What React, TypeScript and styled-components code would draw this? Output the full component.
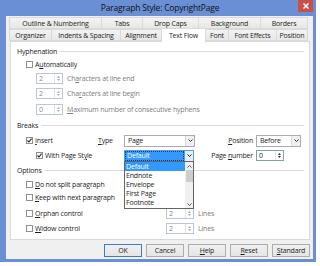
import styled, { createGlobalStyle } from "styled-components";

const GlobalStyle = createGlobalStyle`
  html, body { margin: 0; padding: 0; background: #fff; }
  body {
    font-family: "Open Sans", "Noto Sans", sans-serif;
    font-size: 7px;
    letter-spacing: -0.18px;
    color: #1e1e1e;
  }
  * { box-sizing: border-box; }
`;

const StyledWindow = styled.div`
  width: 316px;
  height: 262px;
  background: #6a8fd5;
  display: flex;
  flex-direction: column;
  padding: 0 3px 3px 6px;
`;

const StyledTitleBar = styled.div`
  height: 16px;
  margin: 0 -3px 0 -6px;
  display: grid;
  grid-template-columns: 1fr auto 1fr;
  align-items: start;
`;

const StyledTitle = styled.div`
  grid-column: 2;
  font-size: 8.5px;
  letter-spacing: -0.2px;
  line-height: 15px;
  color: #111;
  padding-left: 4px;
`;

const StyledClose = styled.div`
  grid-column: 3;
  justify-self: end;
  width: 15px;
  height: 12px;
  margin-right: 3px;
  background: #c7504b;
  display: flex;
  align-items: center;
  justify-content: center;
`;

const StyledClient = styled.div`
  flex: 1;
  background: #f0f0f0;
  display: flex;
  flex-direction: column;
  padding: 1px 2px 2px 3px;
`;

const StyledTabRow = styled.div`
  display: flex;
  height: 12px;
  align-items: flex-end;
`;

const StyledTab = styled.div<{ $w: number; $active?: boolean }>`
  flex: 0 0 ${({ $w }) => $w}px;
  height: ${({ $active }) => ($active ? 14 : 12)}px;
  margin-left: -1px;
  margin-bottom: ${({ $active }) => ($active ? -1 : 0)}px;
  border: 1px solid #d9d9d9;
  border-bottom: ${({ $active }) => ($active ? "none" : "1px solid #d9d9d9")};
  background: ${({ $active }) =>
    $active ? "#fff" : "linear-gradient(#f3f3f3, #e7e7e7)"};
  position: relative;
  z-index: ${({ $active }) => ($active ? 1 : 0)};
  display: flex;
  align-items: center;
  justify-content: center;
  white-space: nowrap;
  color: #1e1e1e;
  &:first-child { margin-left: 0; }
`;

const StyledPanel = styled.div`
  height: 199px;
  margin: 0 1px 0 1px;
  background: #fff;
  border: 1px solid #d9d9d9;
  padding: 3px 0 0 0;
  display: flex;
  flex-direction: column;
`;

const StyledRow = styled.div<{ $h: number; $indent?: number }>`
  height: ${({ $h }) => $h}px;
  flex: none;
  display: flex;
  align-items: center;
  padding-left: ${({ $indent }) => $indent ?? 15}px;
  white-space: nowrap;
`;

const StyledSectionTitle = styled(StyledRow)`
  gap: 3px;
  padding-right: 5px;
  color: #222;
  &::after {
    content: "";
    flex: 1;
    height: 1px;
    background: #dcdcdc;
  }
`;

const StyledCheckItem = styled.div<{ $w?: number }>`
  display: flex;
  align-items: center;
  gap: 2px;
  width: ${({ $w }) => ($w ? `${$w}px` : "auto")};
  flex: none;
`;

const StyledBox = styled.span`
  width: 7px;
  height: 7px;
  border: 1px solid #8f8f8f;
  background: #fff;
  display: flex;
  align-items: center;
  justify-content: center;
`;

const StyledLabel = styled.span<{ $muted?: boolean }>`
  color: ${({ $muted }) => ($muted ? "#7d7d7d" : "#1e1e1e")};
  & u { text-decoration-thickness: 0.5px; text-underline-offset: 1px; }
`;

const StyledSpin = styled.div<{ $w: number; $disabled?: boolean }>`
  width: ${({ $w }) => $w}px;
  height: 11px;
  flex: none;
  display: flex;
  background: #fff;
  border: 1px solid ${({ $disabled }) => ($disabled ? "#b8c6d6" : "#7f9db9")};
  color: ${({ $disabled }) => ($disabled ? "#8a8a8a" : "#1e1e1e")};
  margin-right: 4px;
`;

const StyledSpinValue = styled.span`
  flex: 1;
  padding-left: 2px;
  line-height: 9px;
`;

const StyledSpinButtons = styled.span<{ $disabled?: boolean }>`
  width: 8px;
  border-left: 1px solid #e3e3e3;
  display: flex;
  flex-direction: column;
  align-items: center;
  justify-content: center;
  gap: 1px;
  color: ${({ $disabled }) => ($disabled ? "#a8a8a8" : "#333")};
`;

const StyledBreaksGrid = styled.div`
  display: grid;
  grid-template-columns: 87px 26px 71px 61px 45px;
  grid-template-rows: 15px 15px;
  align-items: center;
  flex: none;
`;

const StyledCell = styled.div<{ $right?: boolean; $indent?: number; $span?: number }>`
  grid-column: ${({ $span }) => ($span ? `span ${$span}` : "auto")};
  display: flex;
  align-items: center;
  justify-content: ${({ $right }) => ($right ? "flex-end" : "flex-start")};
  padding-left: ${({ $indent }) => $indent ?? 0}px;
  padding-right: ${({ $right }) => ($right ? 3 : 0)}px;
  white-space: nowrap;
  position: relative;
`;

const StyledCombo = styled.div<{ $w: number; $focus?: boolean }>`
  width: ${({ $w }) => $w}px;
  height: 12px;
  display: flex;
  background: #fff;
  border: 1px solid ${({ $focus }) => ($focus ? "#569de5" : "#acacac")};
  position: relative;
`;

const StyledComboText = styled.span<{ $selected?: boolean }>`
  flex: 1;
  display: flex;
  align-items: center;
  padding-left: 2px;
  background: ${({ $selected }) => ($selected ? "#3399ff" : "transparent")};
  background-clip: content-box;
  color: ${({ $selected }) => ($selected ? "#fff" : "#1e1e1e")};
  border: 1px ${({ $selected }) => ($selected ? "dotted #1e3a78" : "solid transparent")};
  ${({ $selected }) => ($selected ? "padding-left: 1px; background-clip: border-box;" : "")}
`;

const StyledComboButton = styled.span<{ $focus?: boolean }>`
  width: 9px;
  border-left: 1px solid ${({ $focus }) => ($focus ? "#569de5" : "#dadada")};
  background: ${({ $focus }) => ($focus ? "#e5f1fb" : "#f0f0f0")};
  display: flex;
  align-items: center;
  justify-content: center;
`;

const StyledDropList = styled.div`
  position: absolute;
  top: 100%;
  left: -1px;
  width: 70px;
  height: 48px;
  background: #fff;
  border: 1px solid #646464;
  display: flex;
  z-index: 5;
`;

const StyledItems = styled.div`
  flex: 1;
  display: flex;
  flex-direction: column;
`;

const StyledItem = styled.div<{ $selected?: boolean }>`
  height: 9.2px;
  line-height: 9.2px;
  padding-left: 1px;
  background: ${({ $selected }) => ($selected ? "#3399ff" : "transparent")};
  color: ${({ $selected }) => ($selected ? "#fff" : "#1e1e1e")};
`;

const StyledScrollBar = styled.div`
  width: 8px;
  background: #f0f0f0;
  display: flex;
  flex-direction: column;
  align-items: center;
  justify-content: space-between;
  padding: 3px 0 2px;
`;

const StyledThumb = styled.div`
  width: 7px;
  height: 12px;
  background: #cdcdcd;
  margin-bottom: auto;
  margin-top: 2px;
`;

const StyledButtonRow = styled.div`
  display: flex;
  justify-content: flex-end;
  gap: 4px;
  margin-top: 4px;
  padding-right: 1px;
`;

const StyledButton = styled.div<{ $default?: boolean }>`
  width: 38px;
  height: 13px;
  border: 1px solid ${({ $default }) => ($default ? "#3c7fb1" : "#adadad")};
  background: linear-gradient(#f0f0f0, #e5e5e5);
  display: flex;
  align-items: center;
  justify-content: center;
  color: #1e1e1e;
  & u { text-decoration-thickness: 0.5px; text-underline-offset: 1px; }
`;

const Check = () => (
  <svg width="5" height="5" viewBox="0 0 5 5">
    <path d="M0.5 2.5 L2 4 L4.6 0.6" fill="none" stroke="#222" strokeWidth="1.1" />
  </svg>
);

const Chevron = ({ color = "#333" }: { color?: string }) => (
  <svg width="5" height="3" viewBox="0 0 5 3">
    <path d="M0.5 0.5 L2.5 2.5 L4.5 0.5" fill="none" stroke={color} strokeWidth="1" />
  </svg>
);

const Tri = ({ up }: { up?: boolean }) => (
  <svg width="3" height="2" viewBox="0 0 3 2">
    <path d={up ? "M0 2 L1.5 0 L3 2Z" : "M0 0 L1.5 2 L3 0Z"} fill="currentColor" />
  </svg>
);

const CheckBox = ({ checked, children, w, muted }: { checked?: boolean; children: React.ReactNode; w?: number; muted?: boolean }) => (
  <StyledCheckItem $w={w}>
    <StyledBox>{checked && <Check />}</StyledBox>
    <StyledLabel $muted={muted}>{children}</StyledLabel>
  </StyledCheckItem>
);

const Spin = ({ value, w, disabled }: { value: string; w: number; disabled?: boolean }) => (
  <StyledSpin $w={w} $disabled={disabled}>
    <StyledSpinValue>{value}</StyledSpinValue>
    <StyledSpinButtons $disabled={disabled}>
      <Tri up />
      <Tri />
    </StyledSpinButtons>
  </StyledSpin>
);

const tabsTop = [
  { label: "Outline & Numbering", w: 93 },
  { label: "Tabs", w: 42 },
  { label: "Drop Caps", w: 57 },
  { label: "Background", w: 63 },
  { label: "Borders", w: 48 },
];

const tabsBottom = [
  { label: "Organizer", w: 43 },
  { label: "Indents & Spacing", w: 70 },
  { label: "Alignment", w: 42 },
  { label: "Text Flow", w: 45, active: true },
  { label: "Font", w: 24 },
  { label: "Font Effects", w: 49 },
  { label: "Position", w: 32 },
];

const pageStyles = ["Default", "Endnote", "Envelope", "First Page", "Footnote"];

export default function App() {
  return (
    <>
      <GlobalStyle />
      <StyledWindow>
        <StyledTitleBar>
          <StyledTitle>Paragraph Style: CopyrightPage</StyledTitle>
          <StyledClose>
            <svg width="6" height="6" viewBox="0 0 6 6">
              <path d="M0.5 0.5 L5.5 5.5 M5.5 0.5 L0.5 5.5" stroke="#fff" strokeWidth="1.5" />
            </svg>
          </StyledClose>
        </StyledTitleBar>
        <StyledClient>
          <StyledTabRow>
            {tabsTop.map((t) => (
              <StyledTab key={t.label} $w={t.w}>{t.label}</StyledTab>
            ))}
          </StyledTabRow>
          <StyledTabRow>
            {tabsBottom.map((t) => (
              <StyledTab key={t.label} $w={t.w} $active={t.active}>{t.label}</StyledTab>
            ))}
          </StyledTabRow>
          <StyledPanel>
            <StyledSectionTitle $h={13} $indent={6}>Hyphenation</StyledSectionTitle>
            <StyledRow $h={12}>
              <CheckBox>A<u>u</u>tomatically</CheckBox>
            </StyledRow>
            <StyledRow $h={16} $indent={25}>
              <Spin value="2" w={27} disabled />
              <StyledLabel $muted>Ch<u>a</u>racters at line end</StyledLabel>
            </StyledRow>
            <StyledRow $h={15} $indent={25}>
              <Spin value="2" w={27} disabled />
              <StyledLabel $muted>Cha<u>r</u>acters at line begin</StyledLabel>
            </StyledRow>
            <StyledRow $h={16} $indent={25}>
              <Spin value="0" w={27} disabled />
              <StyledLabel $muted><u>M</u>aximum number of consecutive hyphens</StyledLabel>
            </StyledRow>
            <StyledSectionTitle $h={16} $indent={6}>Breaks</StyledSectionTitle>
            <StyledBreaksGrid>
              <StyledCell $indent={15}>
                <CheckBox checked><u>I</u>nsert</CheckBox>
              </StyledCell>
              <StyledCell><StyledLabel><u>T</u>ype</StyledLabel></StyledCell>
              <StyledCell>
                <StyledCombo $w={71}>
                  <StyledComboText>Page</StyledComboText>
                  <StyledComboButton><Chevron /></StyledComboButton>
                </StyledCombo>
              </StyledCell>
              <StyledCell $right><StyledLabel><u>P</u>osition</StyledLabel></StyledCell>
              <StyledCell>
                <StyledCombo $w={45}>
                  <StyledComboText>Before</StyledComboText>
                  <StyledComboButton><Chevron /></StyledComboButton>
                </StyledCombo>
              </StyledCell>
              <StyledCell $indent={25} $span={2}>
                <CheckBox checked>With Page St<u>y</u>le</CheckBox>
              </StyledCell>
              <StyledCell>
                <StyledCombo $w={70} $focus>
                  <StyledComboText $selected>Default</StyledComboText>
                  <StyledComboButton $focus><Chevron color="#1e1e1e" /></StyledComboButton>
                  <StyledDropList>
                    <StyledItems>
                      {pageStyles.map((p, i) => (
                        <StyledItem key={p} $selected={i === 0}>{p}</StyledItem>
                      ))}
                    </StyledItems>
                    <StyledScrollBar>
                      <svg width="5" height="3" viewBox="0 0 5 3">
                        <path d="M0.5 2.5 L2.5 0.5 L4.5 2.5" fill="none" stroke="#555" strokeWidth="1" />
                      </svg>
                      <StyledThumb />
                      <Chevron color="#555" />
                    </StyledScrollBar>
                  </StyledDropList>
                </StyledCombo>
              </StyledCell>
              <StyledCell $right><StyledLabel>Page <u>n</u>umber</StyledLabel></StyledCell>
              <StyledCell><Spin value="0" w={28} /></StyledCell>
            </StyledBreaksGrid>
            <StyledSectionTitle $h={15} $indent={6}>Options</StyledSectionTitle>
            <StyledRow $h={12}>
              <CheckBox><u>D</u>o not split paragraph</CheckBox>
            </StyledRow>
            <StyledRow $h={15}>
              <CheckBox><u>K</u>eep with next paragraph</CheckBox>
            </StyledRow>
            <StyledRow $h={16}>
              <CheckBox w={140}><u>O</u>rphan control</CheckBox>
              <Spin value="2" w={28} disabled />
              <StyledLabel $muted>Lines</StyledLabel>
            </StyledRow>
            <StyledRow $h={14}>
              <CheckBox w={140}><u>W</u>idow control</CheckBox>
              <Spin value="2" w={28} disabled />
              <StyledLabel $muted>Lines</StyledLabel>
            </StyledRow>
          </StyledPanel>
          <StyledButtonRow>
            <StyledButton $default>OK</StyledButton>
            <StyledButton>Cancel</StyledButton>
            <StyledButton><u>H</u>elp</StyledButton>
            <StyledButton><u>R</u>eset</StyledButton>
            <StyledButton><u>S</u>tandard</StyledButton>
          </StyledButtonRow>
        </StyledClient>
      </StyledWindow>
    </>
  );
}
